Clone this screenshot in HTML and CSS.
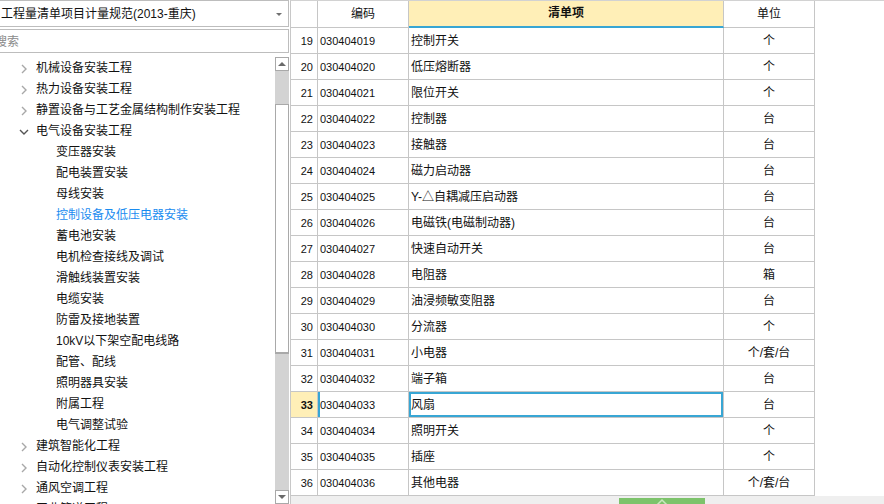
FILE: index.html
```html
<!DOCTYPE html>
<html lang="zh-CN">
<head>
<meta charset="utf-8">
<title>清单项</title>
<link rel="stylesheet" href="styles.css">
</head>
<body>
<div class="app">
  <aside class="side">
    <div class="combo">
      <span class="combo-text">工程量清单项目计量规范(2013-重庆)</span>
      <span class="combo-arrow"></span>
    </div>
    <div class="search">搜索</div>
    <div class="treewrap">
      <ul class="tree">
        <li class="node"><svg class="chev" viewBox="0 0 8 10" width="8" height="10"><polyline points="2,1 6,5 2,9" /></svg><span>机械设备安装工程</span></li>
        <li class="node"><svg class="chev" viewBox="0 0 8 10" width="8" height="10"><polyline points="2,1 6,5 2,9" /></svg><span>热力设备安装工程</span></li>
        <li class="node"><svg class="chev" viewBox="0 0 8 10" width="8" height="10"><polyline points="2,1 6,5 2,9" /></svg><span>静置设备与工艺金属结构制作安装工程</span></li>
        <li class="node open"><svg class="chev" viewBox="0 0 10 8" width="10" height="8"><polyline points="1,2 5,6 9,2" /></svg><span>电气设备安装工程</span></li>
        <li class="leaf">变压器安装</li>
        <li class="leaf">配电装置安装</li>
        <li class="leaf">母线安装</li>
        <li class="leaf active">控制设备及低压电器安装</li>
        <li class="leaf">蓄电池安装</li>
        <li class="leaf">电机检查接线及调试</li>
        <li class="leaf">滑触线装置安装</li>
        <li class="leaf">电缆安装</li>
        <li class="leaf">防雷及接地装置</li>
        <li class="leaf">10kV以下架空配电线路</li>
        <li class="leaf">配管、配线</li>
        <li class="leaf">照明器具安装</li>
        <li class="leaf">附属工程</li>
        <li class="leaf">电气调整试验</li>
        <li class="node"><svg class="chev" viewBox="0 0 8 10" width="8" height="10"><polyline points="2,1 6,5 2,9" /></svg><span>建筑智能化工程</span></li>
        <li class="node"><svg class="chev" viewBox="0 0 8 10" width="8" height="10"><polyline points="2,1 6,5 2,9" /></svg><span>自动化控制仪表安装工程</span></li>
        <li class="node"><svg class="chev" viewBox="0 0 8 10" width="8" height="10"><polyline points="2,1 6,5 2,9" /></svg><span>通风空调工程</span></li>
        <li class="node"><svg class="chev" viewBox="0 0 8 10" width="8" height="10"><polyline points="2,1 6,5 2,9" /></svg><span>工业管道工程</span></li>
      </ul>
      <div class="vscroll">
        <div class="sb-btn"><svg viewBox="0 0 12 12" width="12" height="12"><polygon points="2,8 6,4 10,8" /></svg></div>
        <div class="sb-track">
          <div class="sb-gap"></div>
          <div class="sb-thumb"></div>
        </div>
        <div class="sb-btn"><svg viewBox="0 0 12 12" width="12" height="12"><polygon points="2,4 6,8 10,4" /></svg></div>
      </div>
    </div>
  </aside>

  <main class="grid">
    <div class="table">
      <div class="row head">
        <div class="cell num"></div>
        <div class="cell c-center">编码</div>
        <div class="cell c-center hl">清单项</div>
        <div class="cell c-center">单位</div>
      </div>
      <div class="row"><div class="cell num">19</div><div class="cell code">030404019</div><div class="cell name">控制开关</div><div class="cell c-center">个</div></div>
      <div class="row"><div class="cell num">20</div><div class="cell code">030404020</div><div class="cell name">低压熔断器</div><div class="cell c-center">个</div></div>
      <div class="row"><div class="cell num">21</div><div class="cell code">030404021</div><div class="cell name">限位开关</div><div class="cell c-center">个</div></div>
      <div class="row"><div class="cell num">22</div><div class="cell code">030404022</div><div class="cell name">控制器</div><div class="cell c-center">台</div></div>
      <div class="row"><div class="cell num">23</div><div class="cell code">030404023</div><div class="cell name">接触器</div><div class="cell c-center">台</div></div>
      <div class="row"><div class="cell num">24</div><div class="cell code">030404024</div><div class="cell name">磁力启动器</div><div class="cell c-center">台</div></div>
      <div class="row"><div class="cell num">25</div><div class="cell code">030404025</div><div class="cell name">Y-△自耦减压启动器</div><div class="cell c-center">台</div></div>
      <div class="row"><div class="cell num">26</div><div class="cell code">030404026</div><div class="cell name">电磁铁(电磁制动器)</div><div class="cell c-center">台</div></div>
      <div class="row"><div class="cell num">27</div><div class="cell code">030404027</div><div class="cell name">快速自动开关</div><div class="cell c-center">台</div></div>
      <div class="row"><div class="cell num">28</div><div class="cell code">030404028</div><div class="cell name">电阻器</div><div class="cell c-center">箱</div></div>
      <div class="row"><div class="cell num">29</div><div class="cell code">030404029</div><div class="cell name">油浸频敏变阻器</div><div class="cell c-center">台</div></div>
      <div class="row"><div class="cell num">30</div><div class="cell code">030404030</div><div class="cell name">分流器</div><div class="cell c-center">个</div></div>
      <div class="row"><div class="cell num">31</div><div class="cell code">030404031</div><div class="cell name">小电器</div><div class="cell c-center">个/套/台</div></div>
      <div class="row"><div class="cell num">32</div><div class="cell code">030404032</div><div class="cell name">端子箱</div><div class="cell c-center">台</div></div>
      <div class="row current"><div class="cell num">33</div><div class="cell code">030404033</div><div class="cell name selected">风扇</div><div class="cell c-center">台</div></div>
      <div class="row"><div class="cell num">34</div><div class="cell code">030404034</div><div class="cell name">照明开关</div><div class="cell c-center">个</div></div>
      <div class="row"><div class="cell num">35</div><div class="cell code">030404035</div><div class="cell name">插座</div><div class="cell c-center">个</div></div>
      <div class="row"><div class="cell num">36</div><div class="cell code">030404036</div><div class="cell name">其他电器</div><div class="cell c-center">个/套/台</div></div>
    </div>
    <div class="hbar">
      <div class="handle"><svg viewBox="0 0 14 8" width="14" height="8"><polyline points="2,7 7,2 12,7" /></svg></div>
    </div>
  </main>
</div>
</body>
</html>
```

FILE: styles.css
```css
* { box-sizing: border-box; }

html, body {
  margin: 0;
  padding: 0;
  background: #ffffff;
}

body {
  font-family: "Liberation Sans", "Noto Sans CJK SC", sans-serif;
  font-size: 12px;
  color: #111111;
  width: 884px;
  height: 504px;
  overflow: hidden;
}

.app {
  display: flex;
  height: 504px;
}

/* ---------- left side ---------- */
.side {
  width: 290px;
  flex: none;
  display: flex;
  flex-direction: column;
  overflow: hidden;
  background: #ffffff;
}

.combo {
  height: 27px;
  margin-left: -2px;
  width: 291px;
  border: 1px solid #bdbdbd;
  display: flex;
  align-items: center;
  padding-left: 2px;
  padding-right: 4px;
  padding-top: 1px;
  flex: none;
}

.combo-text {
  flex: 1;
  white-space: nowrap;
  line-height: 24px;
  font-size: 12px;
}

.combo-arrow {
  width: 0;
  height: 0;
  border-left: 3px solid transparent;
  border-right: 3px solid transparent;
  border-top: 3px solid #707070;
  margin-right: 2px;
}

.search {
  margin-top: 2px;
  margin-left: -2px;
  width: 291px;
  height: 24px;
  border: 1px solid #bdbdbd;
  color: #8a8a8a;
  line-height: 22px;
  padding-top: 1px;
  text-indent: -4px;
  white-space: nowrap;
  overflow: hidden;
  flex: none;
}

.treewrap {
  margin-top: 4px;
  flex: 1;
  display: flex;
  min-height: 0;
}

.tree {
  list-style: none;
  margin: 0;
  padding: 1px 0 0 0;
  width: 275px;
  flex: none;
  overflow: hidden;
}

.tree li {
  height: 21px;
  line-height: 21px;
  white-space: nowrap;
  display: flex;
  align-items: center;
  color: #111111;
}

.tree .node {
  padding-left: 19px;
}

.tree .node .chev {
  width: 10px;
  flex: none;
  margin-right: 7px;
  fill: none;
  stroke: #a8a8a8;
  stroke-width: 1.4;
}

.tree .node.open .chev {
  stroke: #555555;
}

.tree .leaf {
  padding-left: 56px;
}

.tree .leaf.active {
  color: #1a8cf0;
}

.vscroll {
  width: 14px;
  flex: none;
  display: flex;
  flex-direction: column;
  background: #d3d3d3;
}

.sb-btn {
  height: 14px;
  flex: none;
  background: #ffffff;
  border: 1px solid #a9a9a9;
  display: flex;
  align-items: center;
  justify-content: center;
}

.sb-btn svg {
  fill: #6a6a6a;
}

.sb-track {
  flex: 1;
  display: flex;
  flex-direction: column;
}

.sb-gap {
  height: 33px;
  flex: none;
}

.sb-thumb {
  height: 250px;
  flex: none;
  background: #ffffff;
  border: 1px solid #a9a9a9;
  border-bottom-width: 2px;
}

/* ---------- grid ---------- */
.grid {
  flex: 1;
  display: flex;
  flex-direction: column;
  border-left: 1px solid #c8c8c8;
  border-top: 1px solid #d2d2d2;
  overflow: hidden;
  min-width: 0;
}

.table {
  display: flex;
  flex-direction: column;
  flex: none;
}

.row {
  display: grid;
  grid-template-columns: 27px 91px 315px 91px;
  height: 26px;
}

.row.head {
  height: 27px;
}

.cell {
  border-right: 1px solid #c6c6c6;
  border-bottom: 1px solid #c6c6c6;
  line-height: 23px;
  padding-top: 2px;
  white-space: nowrap;
  overflow: hidden;
  color: #111111;
}

.head .cell {
  line-height: 24px;
  padding-top: 1px;
}

.cell.num {
  text-align: right;
  padding-right: 4px;
  font-size: 11px;
}

.cell.code {
  padding-left: 2px;
  font-size: 11px;
}

.cell.name {
  padding-left: 2px;
}

.c-center {
  text-align: center;
}

.head .hl {
  background: #ffefb7;
  font-weight: bold;
  border-bottom: 2px solid #38a6d4;
  line-height: 23px;
}

.row.current .num {
  background: #ffefb7;
  font-weight: bold;
}

.row.current .code {
  box-shadow: inset 2px 0 0 #38a6d4;
}

.cell.selected {
  box-shadow: inset 0 0 0 2px #38a6d4;
}

.hbar {
  height: 10px;
  flex: none;
  background: #efefef;
  padding-top: 2px;
}

.handle {
  margin-left: 328px;
  width: 86px;
  height: 10px;
  background: #7dc36b;
  display: flex;
  justify-content: center;
}

.handle svg {
  fill: none;
  stroke: #c9e8bf;
  stroke-width: 1.5;
}
```
